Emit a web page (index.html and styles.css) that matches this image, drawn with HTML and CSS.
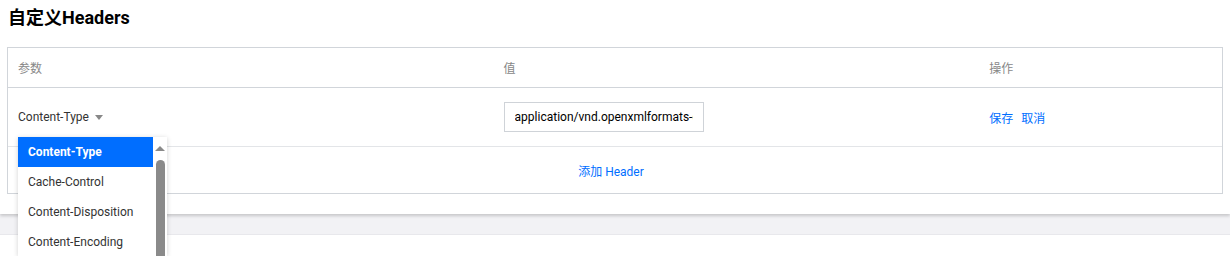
FILE: index.html
```html
<!DOCTYPE html>
<html lang="zh">
<head>
<meta charset="utf-8">
<title>自定义Headers</title>
<link rel="stylesheet" href="styles.css">
</head>
<body>
<div class="panel">
  <h2 class="title">自定义Headers</h2>
  <div class="tbl">
    <div class="row head">
      <div class="cell">参数</div>
      <div class="cell">值</div>
      <div class="cell">操作</div>
    </div>
    <div class="row edit">
      <div class="cell">
        <div class="select">
          <span class="select-text">Content-Type</span>
          <span class="caret"></span>
          <div class="dropdown">
            <ul class="options">
              <li class="opt selected">Content-Type</li>
              <li class="opt">Cache-Control</li>
              <li class="opt">Content-Disposition</li>
              <li class="opt">Content-Encoding</li>
            </ul>
            <div class="scrollbar">
              <span class="arrow-up"></span>
              <span class="thumb"></span>
            </div>
          </div>
        </div>
      </div>
      <div class="cell">
        <input class="input" type="text" value="application/vnd.openxmlformats-officedocument.spreadsheetml.sheet">
      </div>
      <div class="cell">
        <a class="link">保存</a><a class="link">取消</a>
      </div>
    </div>
    <div class="row add">
      <a class="link">添加 Header</a>
    </div>
  </div>
</div>
<div class="strip"></div>
<div class="below"></div>
</body>
</html>
```
FILE: styles.css
```css
html {
  overflow: hidden;
}
html, body {
  margin: 0;
  padding: 0;
  background: #fff;
}
body {
  font-family: Roboto, "Noto Sans CJK SC", "Liberation Sans", sans-serif;
  font-size: 12px;
  color: #333;
}
.panel {
  position: relative;
  z-index: 1;
  background: #fff;
  padding: 6px 7px 20px 7px;
  box-shadow: 0 2px 3px rgba(0, 0, 0, 0.18);
}
.title {
  margin: 0 0 17px 1px;
  font-size: 18px;
  line-height: 24px;
  font-weight: bold;
  color: #000;
}
.tbl {
  border: 1px solid #d1d5da;
}
.row {
  display: grid;
  grid-template-columns: 40% 40% 20%;
  border-bottom: 1px solid #e3e5e8;
}
.row:last-child {
  border-bottom: none;
}
.cell {
  display: flex;
  align-items: center;
  padding: 0 10px;
}
.head {
  height: 39px;
  border-bottom-color: #d1d5da;
}
.head .cell {
  color: #888;
}
.edit {
  height: 58px;
}
.add {
  display: flex;
  justify-content: center;
  align-items: center;
  height: 46px;
  padding-right: 8px;
}
.select {
  position: relative;
  display: flex;
  align-items: center;
  height: 30px;
}
.select-text {
  color: #333;
}
.caret {
  width: 0;
  height: 0;
  margin-left: 6px;
  border-left: 4px solid transparent;
  border-right: 4px solid transparent;
  border-top: 5px solid #888;
}
.dropdown {
  position: absolute;
  left: 0;
  top: 35px;
  width: 149px;
  height: 119px;
  overflow: hidden;
  display: flex;
  background: #fff;
  box-shadow: 0 1px 5px rgba(0, 0, 0, 0.18);
  z-index: 5;
}
.options {
  list-style: none;
  margin: 0;
  padding: 0;
  flex: 1;
}
.opt {
  height: 30px;
  line-height: 30px;
  padding-left: 10px;
  color: #333;
  white-space: nowrap;
}
.opt.selected {
  background: #006eff;
  color: #fff;
  font-weight: bold;
}
.scrollbar {
  width: 14px;
  display: flex;
  flex-direction: column;
  align-items: center;
  background: #fff;
}
.arrow-up {
  width: 0;
  height: 0;
  margin-top: 9px;
  border-left: 5px solid transparent;
  border-right: 5px solid transparent;
  border-bottom: 5px solid #8a8a8a;
}
.thumb {
  margin-top: 9px;
  width: 9px;
  flex: 1;
  background: #8a8a8a;
  border-radius: 5px 5px 0 0;
}
.input {
  box-sizing: border-box;
  width: 200px;
  height: 30px;
  border: 1px solid #cfd3d8;
  padding: 0 10px;
  font-family: inherit;
  font-size: 12px;
  color: #000;
  outline: none;
}
.link {
  color: #006eff;
  cursor: pointer;
  margin-right: 8px;
}
.add .link {
  margin-right: 0;
}
.strip {
  height: 20px;
  background: #f2f2f5;
  border-bottom: 1px solid #e8e8ec;
}
.below {
  height: 21px;
  background: #fff;
}
```
